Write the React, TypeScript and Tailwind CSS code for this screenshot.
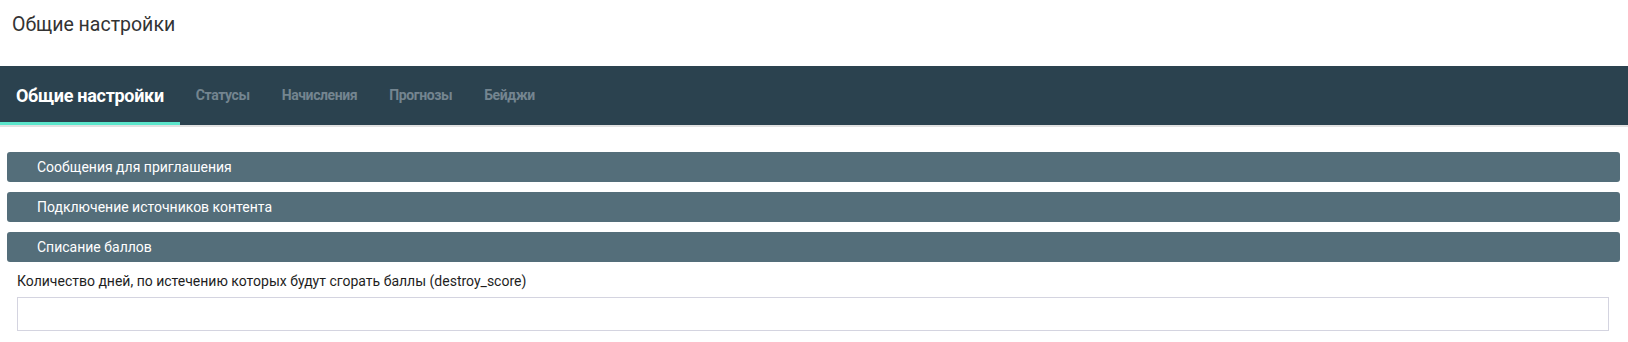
import React from "react";

const tabs = ["Статусы", "Начисления", "Прогнозы", "Бейджи"];

const sections = [
    "Сообщения для приглашения",
    "Подключение источников контента",
    "Списание баллов",
];

export default function App() {
    return (
        <div className="w-full bg-white font-['Roboto',sans-serif]">
            {/* Page title */}
            <div className="h-[66px] pl-3 pt-[13px]">
                <h1 className="text-[19.5px] leading-6 text-[#333]">Общие настройки</h1>
            </div>

            {/* Tabs */}
            <div className="flex h-[61px] items-stretch border-b-2 border-[#e2e2e2] bg-[#2b424f]">
                <div className="flex items-center border-b-[3px] border-[#5ce6cc] px-4 pt-[3px] text-[18px] font-bold tracking-[-0.3px] text-white">
                    Общие настройки
                </div>
                {tabs.map((t) => (
                    <div
                        key={t}
                        className="flex items-center px-4 text-[14px] font-bold tracking-[-0.4px] text-[#748590]"
                    >
                        {t}
                    </div>
                ))}
            </div>

            {/* Accordion */}
            <div className="flex flex-col gap-[10px] pl-[7px] pr-2 pt-[25px]">
                {sections.map((s) => (
                    <div
                        key={s}
                        className="flex h-[30px] items-center rounded-[3px] bg-[#546e7a] pl-[30px] text-[14px] text-white"
                    >
                        {s}
                    </div>
                ))}
            </div>

            {/* Field */}
            <div className="pl-[17px] pr-[19px] pt-[11px]">
                <label className="block text-[14px] leading-4 text-[#1e1e1e]">
                    Количество дней, по истечению которых будут сгорать баллы (destroy_score)
                </label>
                <input
                    type="text"
                    className="mt-2 block h-[34px] w-full border border-[#d4d4e0] bg-white px-2 outline-none"
                />
            </div>
        </div>
    );
}
